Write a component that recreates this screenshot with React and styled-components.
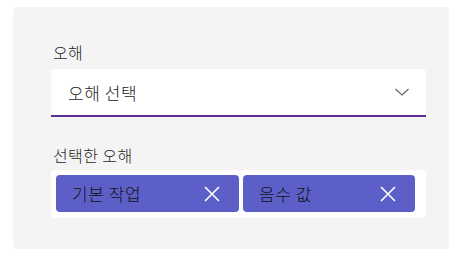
import React from "react";
import styled, { createGlobalStyle } from "styled-components";

const GlobalStyle = createGlobalStyle`
  body {
    margin: 0;
    background: #ffffff;
    font-family: "Noto Sans CJK KR", "Noto Sans", sans-serif;
  }
`;

const Card = styled.div`
  box-sizing: border-box;
  margin: 7px 0 0 13px;
  width: 436px;
  height: 242px;
  background: #f4f4f4;
  border-radius: 4px;
  padding: 34px 23px 0 38px;
  display: flex;
  flex-direction: column;
`;

const Label = styled.div`
  font-size: 16px;
  line-height: 22px;
  font-weight: 300;
  letter-spacing: 0.4px;
  color: #242424;
  padding-left: 2px;
  margin-top: ${(p) => p.$top || 0}px;
  margin-bottom: ${(p) => p.$bottom || 0}px;
`;

const Dropdown = styled.div`
  box-sizing: border-box;
  height: 48px;
  background: #ffffff;
  border-radius: 4px 4px 0 0;
  border-bottom: 2px solid #5c2e91;
  display: flex;
  align-items: center;
  justify-content: space-between;
  padding: 0 16px 0 17px;
  font-size: 17px;
  font-weight: 300;
  letter-spacing: 0.6px;
  color: #242424;
`;

const ChipTray = styled.div`
  box-sizing: border-box;
  height: 48px;
  background: #ffffff;
  border-radius: 4px;
  display: flex;
  gap: 4px;
  padding: 5px 5px 6px 5px;
`;

const Chip = styled.div`
  box-sizing: border-box;
  width: ${(p) => p.$width}px;
  height: 37px;
  background: #5b5fc7;
  border-radius: 4px;
  display: flex;
  align-items: center;
  justify-content: space-between;
  padding: 0 19px 0 16px;
  font-size: 17px;
  font-weight: 300;
  letter-spacing: 0.6px;
  color: #111111;
`;

const Chevron = () => (
  <svg width="16" height="16" viewBox="0 0 16 16" fill="none">
    <path d="M1.5 5 L8 11 L14.5 5" stroke="#616161" strokeWidth="1.1" />
  </svg>
);

const Cross = () => (
  <svg width="16" height="16" viewBox="0 0 16 16" fill="none">
    <path d="M1 1 L15 15 M15 1 L1 15" stroke="#ffffff" strokeWidth="1.6" />
  </svg>
);

const chips = [
  { label: "기본 작업", width: 183 },
  { label: "음수 값", width: 172 },
];

export default function App() {
  return (
    <>
      <GlobalStyle />
      <Card>
        <Label $bottom={6}>오해</Label>
        <Dropdown>
          <span>오해 선택</span>
          <Chevron />
        </Dropdown>
        <Label $top={27} $bottom={4}>
          선택한 오해
        </Label>
        <ChipTray>
          {chips.map((c) => (
            <Chip key={c.label} $width={c.width}>
              <span>{c.label}</span>
              <Cross />
            </Chip>
          ))}
        </ChipTray>
      </Card>
    </>
  );
}
